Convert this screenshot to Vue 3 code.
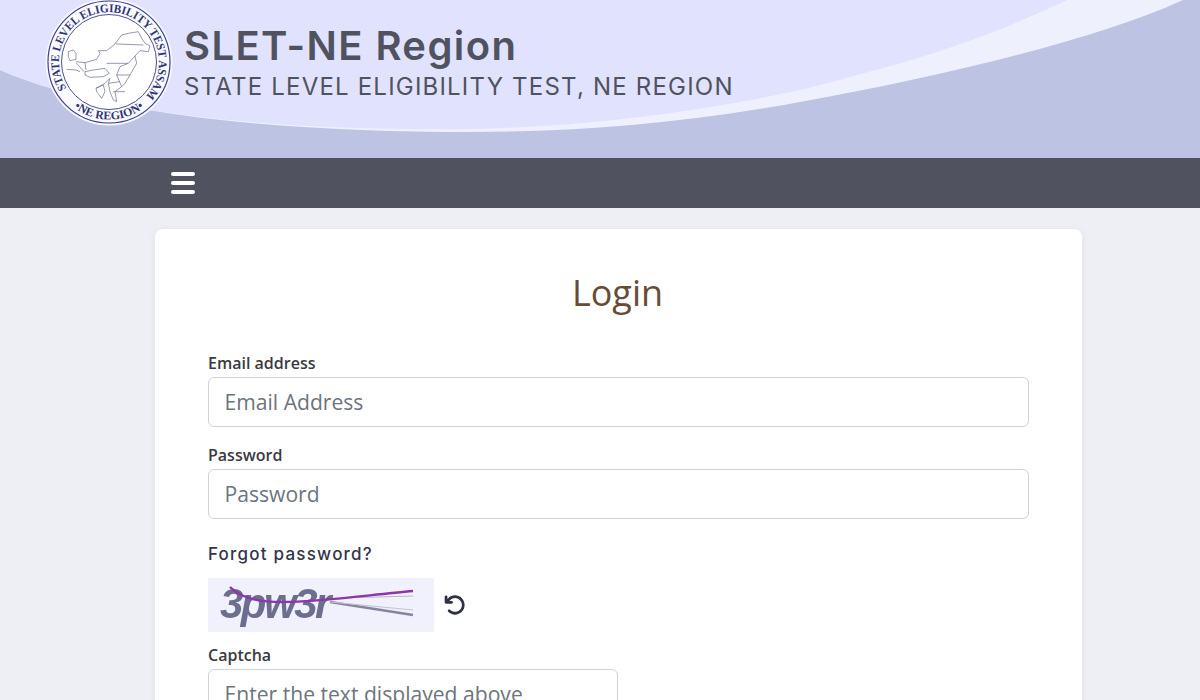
<script setup>
const navIcon = [0, 1, 2]
</script>

<template>
  <div class="page">
    <header class="banner">
      <svg class="swoosh" viewBox="0 0 1200 158" preserveAspectRatio="none" aria-hidden="true">
        <rect width="1200" height="158" fill="#bdc3e3" />
        <path d="M0 0H1183C1100 38 950 75 800 102C680 124 570 132 470 132C300 132 110 118 0 70Z" fill="#eef0fe" />
        <path d="M0 0H1067C1015 25 950 50 883 68C850 77 825 84 800 90C680 116 570 127 470 129C300 131 110 118 0 70Z" fill="#e1e2fd" />
      </svg>
      <svg class="logo" viewBox="0 0 128 128" aria-label="SLET NE Region seal">
        <defs>
          <path id="topArc" d="M21.500 90.500A50 50 0 1 1 100.800 97.900" />
          <path id="bottomArc" d="M26 107A57 57 0 0 0 102 107" />
        </defs>
        <circle cx="64" cy="64" r="63.500" fill="#f6f6fe" />
        <circle cx="64" cy="64" r="61" fill="#fbfbff" stroke="#3a4284" stroke-width="1.200" />
        <circle cx="64" cy="64" r="47.500" fill="#fff" stroke="#4a5190" stroke-width="1" />
        <text class="sealText" textLength="222" lengthAdjust="spacingAndGlyphs"><textPath href="#topArc">STATE LEVEL ELIGIBILITY TEST ASSAM</textPath></text>
        <text class="sealText"><textPath href="#bottomArc" startOffset="50%" text-anchor="middle">•NE REGION•</textPath></text>
        <g transform="translate(15 22) scale(.3333)" fill="none" stroke="#62658c" stroke-width="2">
          <path d="M25 95L40 90L48 100L48 118L30 122L25 110Z" />
          <path d="M48 125L75 128L110 118L120 100L115 92L140 92L165 72L185 45L205 40L235 35L245 55L255 70L270 78L265 95L240 92L225 108L205 130L180 140L170 165L185 200L165 215L170 245L160 240L150 215L145 190L150 175L135 190L108 205" />
          <path d="M168 72L250 75M225 108L230 130L210 165L195 190L185 200M170 165L210 165M140 130L205 130" />
          <path d="M75 155L100 150L135 145L148 160L130 170L90 172L75 165Z" />
          <path d="M108 205L130 195L135 215L125 235L110 215Z" />
          <path d="M48 128L72 155M20 148L48 150L60 155M75 128L78 150M145 190L180 185M160 215L195 215" />
        </g>
      </svg>
      <div class="brand">
        <h1>SLET-NE Region</h1>
        <p>STATE LEVEL ELIGIBILITY TEST, NE REGION</p>
      </div>
    </header>

    <nav class="navbar">
      <button class="toggle" type="button" aria-label="Menu">
        <span v-for="bar in navIcon" :key="bar"></span>
      </button>
    </nav>

    <main class="content">
      <section class="card">
        <h2>Login</h2>
        <form class="form" @submit.prevent>
          <div class="field">
            <label for="email">Email address</label>
            <input id="email" type="text" placeholder="Email Address" />
          </div>
          <div class="field">
            <label for="password">Password</label>
            <input id="password" type="text" placeholder="Password" />
          </div>
          <a class="forgot" href="#">Forgot password?</a>
          <div class="captchaRow">
            <svg class="captcha" viewBox="0 0 226 54" aria-label="Captcha image">
              <rect width="226" height="54" fill="#f0f1fc" />
              <g class="captchaInk">
                <text x="12" y="40" class="captchaText">3pw3r</text>
                <path d="M122 24L205 37" fill="none" stroke="#85859f" stroke-width="2.500" />
                <path d="M122 24L205 32" fill="none" stroke="#c2c2d0" stroke-width="1" />
                <path d="M132 20L205 18" fill="none" stroke="#b5b5c5" stroke-width="1" />
                <path d="M22 9C35 22 55 24 75 24C110 24 160 17 205 13" fill="none" stroke="#8c35ac" stroke-width="2.400" />
              </g>
            </svg>
            <svg class="refresh" viewBox="0 0 512 512" aria-label="Refresh captcha">
              <path fill="#2f3146" d="M125.700 160H176c17.700 0 32 14.300 32 32s-14.300 32-32 32H48c-17.700 0-32-14.300-32-32V64c0-17.700 14.300-32 32-32s32 14.300 32 32v51.200l17.600-17.600c87.500-87.500 229.300-87.500 316.800 0s87.500 229.300 0 316.800-229.300 87.500-316.800 0c-12.500-12.500-12.500-32.800 0-45.300s32.800-12.500 45.300 0c62.500 62.500 163.800 62.500 226.300 0s62.500-163.800 0-226.300-163.800-62.500-226.300 0L125.700 160z" />
            </svg>
          </div>
          <div class="field captchaField">
            <label for="captcha">Captcha</label>
            <input id="captcha" type="text" placeholder="Enter the text displayed above" />
          </div>
        </form>
      </section>
    </main>
  </div>
</template>

<style>
html, body { margin: 0; height: 100%; overflow: hidden; background: #eeeef5; }
</style>

<style scoped>
.page { height: 700px; overflow: hidden; background: #eeeef5; font-family: "Open Sans", sans-serif; }
.banner { position: relative; height: 158px; display: flex; align-items: flex-start; overflow: hidden; padding-left: 45px; box-sizing: border-box; }
.swoosh { position: absolute; inset: 0; width: 100%; height: 100%; }
.logo { position: relative; width: 128px; height: 128px; flex: none; margin-top: -2px; }
.sealText { font: 700 11.800px "Liberation Serif", serif; fill: #2d3578; }
.brand { position: relative; margin: 22px 0 0 11px; color: #50525f; font-family: Inter, sans-serif; }
.brand h1 { margin: 0; font-size: 40px; line-height: 48px; font-weight: 600; letter-spacing: 1.4px; }
.brand p { margin: 0; font-size: 24px; line-height: 33px; font-weight: 400; letter-spacing: 1.2px; }
.navbar { height: 50px; background: #50525f; display: flex; align-items: center; padding-left: 171px; }
.toggle { width: 24px; height: 22px; border: 0; padding: 0; background: none; display: flex; flex-direction: column; justify-content: space-between; }
.toggle span { display: block; height: 4px; border-radius: 2px; background: #fff; }
.content { padding: 21px 0 0 155px; }
.card { width: 927px; height: 520px; box-sizing: border-box; background: #fff; border-radius: 8px; padding: 40px 53px 0; box-shadow: 0 1px 6px rgba(60, 60, 90, .08); }
h2 { margin: 0 1px 35px -1px; text-align: center; font-size: 36px; line-height: 48px; font-weight: 400; color: #674d36; }
.field { margin-bottom: 17px; }
label { display: block; font-size: 16px; line-height: 22px; font-weight: 600; color: #3a3a3f; margin-bottom: 3px; }
input { display: block; width: 100%; height: 50px; box-sizing: border-box; border: 1px solid #ced4da; border-radius: 6px; padding: 0 16px 2px 15.500px; font: 400 21.120px "Open Sans", sans-serif; color: #495057; background: #fff; outline: 0; }
input::placeholder { color: #6c757d; opacity: 1; }
.forgot { display: block; margin-top: 25px; font: 500 17px/20px Inter, sans-serif; letter-spacing: 1.220px; color: #33354a; text-decoration: none; }
.captchaRow { display: flex; align-items: center; gap: 10px; margin-top: 14px; }
.captcha { width: 226px; height: 54px; display: block; }
.captchaInk { filter: blur(.4px); }
.captchaText { font: italic 700 42px "Liberation Sans", sans-serif; fill: #6c6e8e; letter-spacing: -2.500px; }
.refresh { width: 22px; height: 22px; }
.captchaField { margin-top: 12px; width: 410px; }
</style>
